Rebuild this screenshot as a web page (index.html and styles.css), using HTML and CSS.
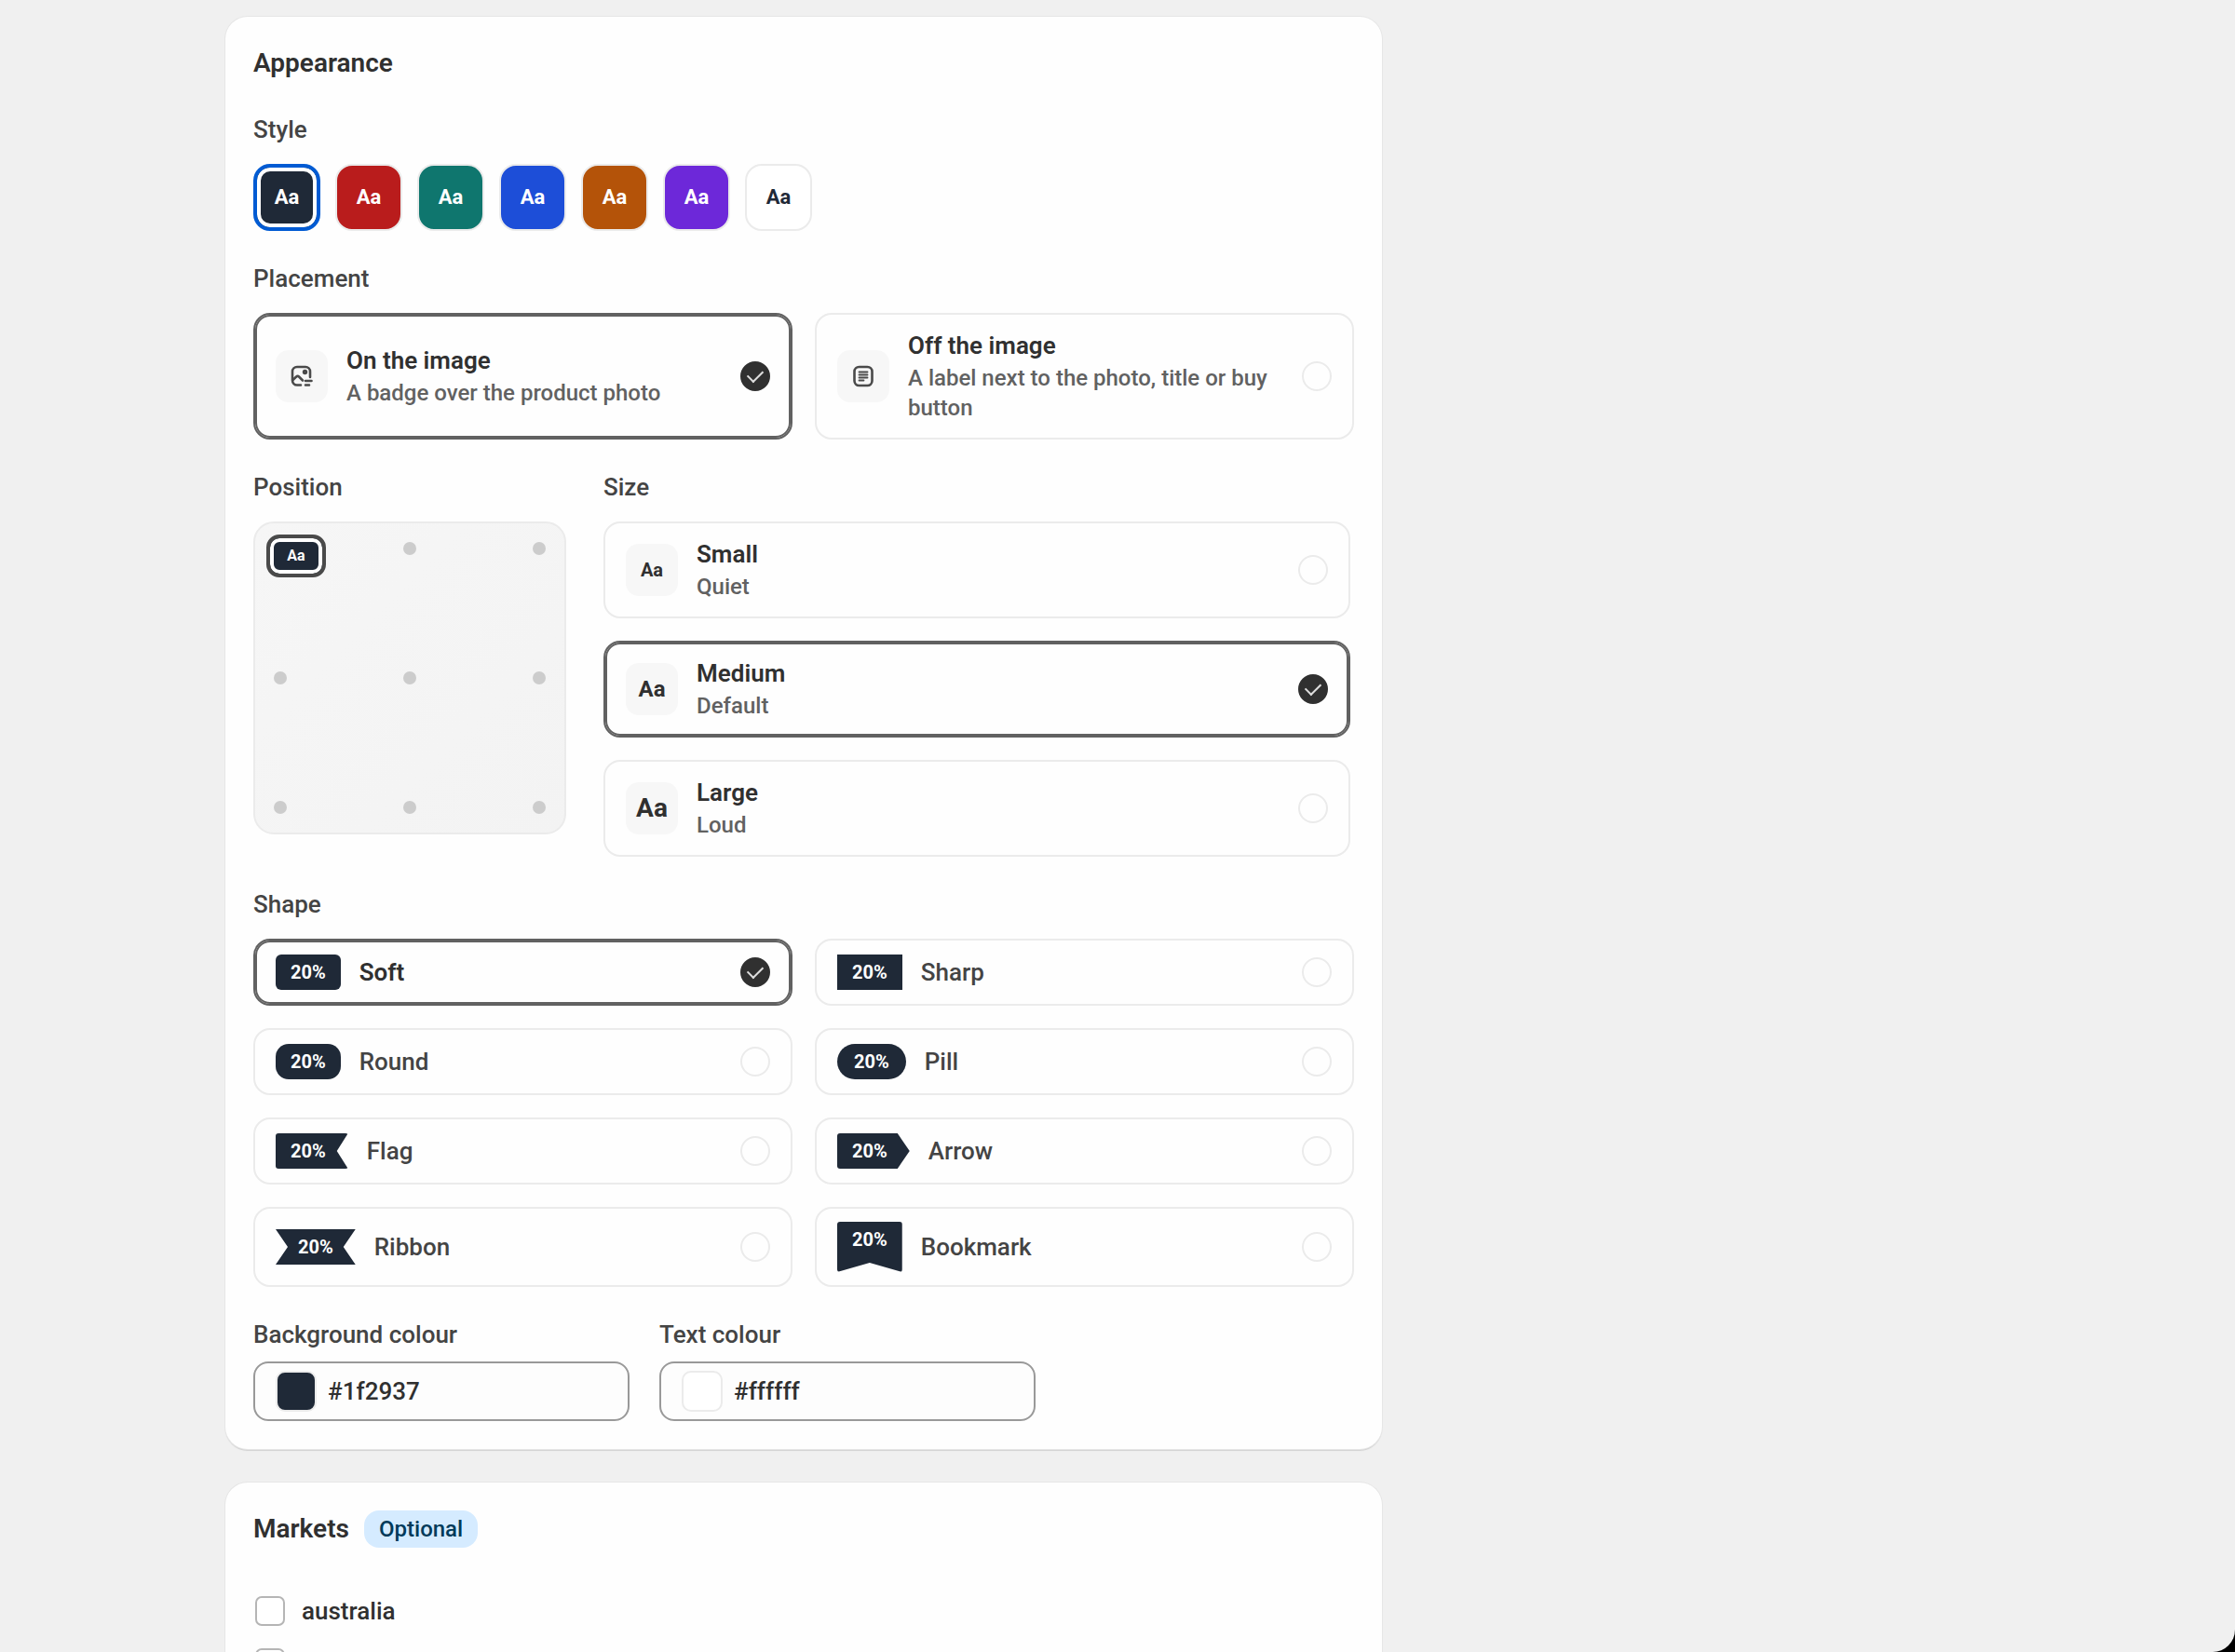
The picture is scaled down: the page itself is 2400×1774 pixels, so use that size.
FILE: index.html
```html
<!DOCTYPE html>
<html lang="en">
<head>
    <meta charset="UTF-8">
    <meta name="viewport" content="width=device-width, initial-scale=1.0">
    <title>Badge appearance</title>
    <link rel="stylesheet" href="styles.css">
</head>
<body>
    <main class="page">
        <section class="card">
            <h2 class="card-title">Appearance</h2>

            <div class="field">
                <h3 class="field-label">Style</h3>
                <div class="swatches">
                    <button type="button" class="swatch navy active">Aa</button>
                    <button type="button" class="swatch red">Aa</button>
                    <button type="button" class="swatch green">Aa</button>
                    <button type="button" class="swatch blue">Aa</button>
                    <button type="button" class="swatch orange">Aa</button>
                    <button type="button" class="swatch purple">Aa</button>
                    <button type="button" class="swatch white">Aa</button>
                </div>
            </div>

            <div class="field">
                <h3 class="field-label">Placement</h3>
                <div class="option-grid">
                    <label class="option">
                        <span class="option-icon">
                            <svg width="26" height="26" viewBox="0 0 26 26" fill="none" stroke="#4a4a4a" stroke-width="2.6" stroke-linecap="round" stroke-linejoin="round">
                                <path d="M12 22.500H8A5 5 0 0 1 3 17.500V8A5 5 0 0 1 8 3H17A5 5 0 0 1 22 8V14"/>
                                <path d="M3.500 17l3.700-3.500a2 2 0 0 1 2.800 0L14 17.500"/>
                                <circle cx="16.500" cy="8.500" r="1.400" fill="#4a4a4a"/>
                                <path d="M17 18h6.500M17 22.500h4"/>
                            </svg>
                        </span>
                        <span class="option-text">
                            <span class="option-title">On the image</span>
                            <span class="option-sub">A badge over the product photo</span>
                        </span>
                        <input type="radio" name="placement" class="radio" checked>
                    </label>
                    <label class="option">
                        <span class="option-icon">
                            <svg width="26" height="26" viewBox="0 0 26 26" fill="none" stroke="#4a4a4a" stroke-width="2.6" stroke-linecap="round">
                                <rect x="3.500" y="3" width="19" height="20" rx="5"/>
                                <path stroke-width="1.800" d="M8.500 8.500h9M8.500 11.500h9M8.500 14.500h9M8.500 17.500h5"/>
                            </svg>
                        </span>
                        <span class="option-text">
                            <span class="option-title">Off the image</span>
                            <span class="option-sub">A label next to the photo, title or buy button</span>
                        </span>
                        <input type="radio" name="placement" class="radio">
                    </label>
                </div>
            </div>

            <div class="field-row">
                <div class="field">
                    <h3 class="field-label">Position</h3>
                    <div class="position-box">
                        <input type="radio" name="position" class="dot" aria-label="Top left" checked>
                        <input type="radio" name="position" class="dot" aria-label="Top centre">
                        <input type="radio" name="position" class="dot" aria-label="Top right">
                        <input type="radio" name="position" class="dot" aria-label="Middle left">
                        <input type="radio" name="position" class="dot" aria-label="Middle centre">
                        <input type="radio" name="position" class="dot" aria-label="Middle right">
                        <input type="radio" name="position" class="dot" aria-label="Bottom left">
                        <input type="radio" name="position" class="dot" aria-label="Bottom centre">
                        <input type="radio" name="position" class="dot" aria-label="Bottom right">
                        <span class="position-badge">Aa</span>
                    </div>
                </div>
                <div class="field size-field">
                    <h3 class="field-label">Size</h3>
                    <div class="option-list">
                        <label class="option">
                            <span class="option-icon small">Aa</span>
                            <span class="option-text">
                                <span class="option-title">Small</span>
                                <span class="option-sub">Quiet</span>
                            </span>
                            <input type="radio" name="size" class="radio">
                        </label>
                        <label class="option">
                            <span class="option-icon medium">Aa</span>
                            <span class="option-text">
                                <span class="option-title">Medium</span>
                                <span class="option-sub">Default</span>
                            </span>
                            <input type="radio" name="size" class="radio" checked>
                        </label>
                        <label class="option">
                            <span class="option-icon large">Aa</span>
                            <span class="option-text">
                                <span class="option-title">Large</span>
                                <span class="option-sub">Loud</span>
                            </span>
                            <input type="radio" name="size" class="radio">
                        </label>
                    </div>
                </div>
            </div>

            <div class="field">
                <h3 class="field-label">Shape</h3>
                <div class="option-grid">
                    <label class="option shape-option">
                        <span class="tag soft">20%</span>
                        <span class="option-text shape-name">Soft</span>
                        <input type="radio" name="shape" class="radio" checked>
                    </label>
                    <label class="option shape-option">
                        <span class="tag">20%</span>
                        <span class="option-text shape-name">Sharp</span>
                        <input type="radio" name="shape" class="radio">
                    </label>
                    <label class="option shape-option">
                        <span class="tag round">20%</span>
                        <span class="option-text shape-name">Round</span>
                        <input type="radio" name="shape" class="radio">
                    </label>
                    <label class="option shape-option">
                        <span class="tag pill">20%</span>
                        <span class="option-text shape-name">Pill</span>
                        <input type="radio" name="shape" class="radio">
                    </label>
                    <label class="option shape-option">
                        <span class="tag flag">20%</span>
                        <span class="option-text shape-name">Flag</span>
                        <input type="radio" name="shape" class="radio">
                    </label>
                    <label class="option shape-option">
                        <span class="tag arrow">20%</span>
                        <span class="option-text shape-name">Arrow</span>
                        <input type="radio" name="shape" class="radio">
                    </label>
                    <label class="option shape-option">
                        <span class="tag ribbon">20%</span>
                        <span class="option-text shape-name">Ribbon</span>
                        <input type="radio" name="shape" class="radio">
                    </label>
                    <label class="option shape-option">
                        <span class="tag bookmark">20%</span>
                        <span class="option-text shape-name">Bookmark</span>
                        <input type="radio" name="shape" class="radio">
                    </label>
                </div>
            </div>

            <div class="colour-row">
                <div class="colour-field">
                    <label class="field-label" for="bgColour">Background colour</label>
                    <div class="colour-input">
                        <button type="button" class="colour-chip navy" aria-label="Pick background colour"></button>
                        <input type="text" id="bgColour" value="#1f2937">
                    </div>
                </div>
                <div class="colour-field">
                    <label class="field-label" for="textColour">Text colour</label>
                    <div class="colour-input">
                        <button type="button" class="colour-chip white" aria-label="Pick text colour"></button>
                        <input type="text" id="textColour" value="#ffffff">
                    </div>
                </div>
            </div>
        </section>

        <section class="card">
            <div class="card-heading">
                <h2 class="card-title">Markets</h2>
                <span class="badge">Optional</span>
            </div>
            <div class="markets">
                <label class="market">
                    <input type="checkbox" class="checkbox">
                    australia
                </label>
                <div class="market">
                    <input type="checkbox" class="checkbox" aria-label="Next market">
                </div>
            </div>
        </section>
    </main>
</body>
</html>
```
FILE: styles.css
```css
* {
    margin: 0;
    padding: 0;
    box-sizing: border-box;
}

:root {
    --navy: #1f2937;
    --text: #303030;
    --muted: #616161;
    --line: #ebebeb;
}

body {
    background: #000;
    color: var(--text);
    font-family: Roboto, "Liberation Sans", sans-serif;
    font-size: 26px;
    font-weight: 500;
    line-height: 36px;
}

button,
input {
    font: inherit;
    color: inherit;
}

.page {
    display: flex;
    flex-direction: column;
    gap: 36px;
    height: 100vh;
    padding: 18px 24px 18px 242px;
    overflow-y: auto;
    scrollbar-width: none;
    background: #f0f0f0;
    border-bottom-right-radius: 24px;
}

.card {
    display: flex;
    flex-direction: column;
    flex-shrink: 0;
    gap: 32px;
    max-width: 1242px;
    padding: 30px;
    background: #fefefe;
    border-radius: 24px;
    box-shadow: 0 0 0 1px #e6e6e6, 0 2px 1px #d0d0d0;
}

.card-heading {
    display: flex;
    align-items: center;
    gap: 16px;
}

.card-title {
    font-size: 28px;
    font-weight: 600;
    line-height: 40px;
}

.field {
    display: flex;
    flex-direction: column;
    gap: 18px;
}

.field-label {
    font-size: 26px;
    font-weight: 500;
    line-height: 38px;
    color: #444;
}

/* Style presets */
.swatches {
    display: flex;
    gap: 16px;
}

.swatch {
    width: 72px;
    height: 72px;
    border: 2px solid var(--line);
    border-radius: 18px;
    color: #fff;
    font-size: 22px;
    font-weight: 700;
    cursor: pointer;
}

.swatch.active {
    border: 4px solid #005bd3;
    box-shadow: inset 0 0 0 4px #fff;
}

.navy {
    background: var(--navy);
}

.red {
    background: #b91c1c;
}

.green {
    background: #0f766e;
}

.blue {
    background: #1d4ed8;
}

.orange {
    background: #b45309;
}

.purple {
    background: #6d28d9;
}

.white {
    background: #fff;
    color: var(--navy);
}

/* Option cards */
.option-grid {
    display: grid;
    grid-template-columns: 1fr 1fr;
    gap: 24px;
}

.option-list {
    display: flex;
    flex-direction: column;
    gap: 24px;
}

.option {
    display: flex;
    align-items: center;
    gap: 20px;
    padding: 16px 22px;
    border: 2px solid var(--line);
    border-radius: 18px;
    cursor: pointer;
}

.option:has(.radio:checked) {
    border-color: #616161;
    box-shadow: inset 0 0 0 2px #616161;
}

.option-icon {
    display: flex;
    align-items: center;
    justify-content: center;
    width: 56px;
    height: 56px;
    border-radius: 14px;
    background: #f7f7f7;
    font-weight: 700;
}

.option-icon.small {
    font-size: 20px;
}

.option-icon.medium {
    font-size: 24px;
}

.option-icon.large {
    font-size: 28px;
}

.option-text {
    display: flex;
    flex: 1;
    flex-direction: column;
    gap: 2px;
}

.option-title {
    font-weight: 600;
    line-height: 34px;
}

.option-sub {
    font-size: 24px;
    line-height: 32px;
    color: var(--muted);
}

.radio {
    display: flex;
    align-items: center;
    justify-content: center;
    width: 32px;
    height: 32px;
    appearance: none;
    border: 2px solid var(--line);
    border-radius: 50%;
}

.radio:checked {
    border-color: var(--text);
    background: var(--text);
}

.radio:checked::after {
    content: "";
    width: 8px;
    height: 14px;
    margin-bottom: 4px;
    border: solid #ddd;
    border-width: 0 2px 2px 0;
    transform: rotate(45deg);
}

/* Position picker */
.field-row {
    display: flex;
    gap: 40px;
    padding-right: 4px;
}

.size-field {
    flex: 1;
}

.position-box {
    position: relative;
    display: grid;
    grid-template-columns: repeat(3, 14px);
    justify-content: space-between;
    align-content: space-between;
    width: 336px;
    height: 336px;
    padding: 20px;
    border: 2px solid var(--line);
    border-radius: 22px;
    background: linear-gradient(135deg, #f6f6f6, #f3f3f3);
}

.dot {
    width: 14px;
    height: 14px;
    appearance: none;
    border-radius: 50%;
    background: #ccc;
}

.position-badge {
    position: absolute;
    top: 12px;
    left: 12px;
    width: 64px;
    height: 46px;
    border: 4px solid #4a4a4a;
    border-radius: 14px;
    background: var(--navy);
    box-shadow: inset 0 0 0 4px #fff;
    color: #fff;
    font-size: 16px;
    font-weight: 700;
    line-height: 38px;
    text-align: center;
}

/* Shape picker */
.shape-option {
    min-height: 72px;
    padding: 14px 22px;
}

.shape-name {
    color: #444;
}

.option:has(.radio:checked) .shape-name {
    font-weight: 600;
    color: var(--text);
}

.tag {
    padding: 0 16px;
    background: var(--navy);
    color: #fff;
    font-size: 20px;
    font-weight: 700;
    line-height: 38px;
}

.tag.soft {
    border-radius: 6px;
}

.tag.round {
    border-radius: 14px;
}

.tag.pill {
    padding: 0 18px;
    border-radius: 19px;
}

.tag.flag {
    padding-right: 24px;
    border-radius: 3px;
    clip-path: polygon(0 0, 100% 0, calc(100% - 12px) 50%, 100% 100%, 0 100%);
}

.tag.arrow {
    padding-right: 24px;
    border-radius: 3px;
    clip-path: polygon(0 0, calc(100% - 13px) 0, 100% 50%, calc(100% - 13px) 100%, 0 100%);
}

.tag.ribbon {
    padding: 0 24px;
    clip-path: polygon(0 0, 100% 0, calc(100% - 13px) 50%, 100% 100%, 0 100%, 13px 50%);
}

.tag.bookmark {
    padding-bottom: 16px;
    border-radius: 3px;
    clip-path: polygon(0 0, 100% 0, 100% 100%, 50% calc(100% - 10px), 0 100%);
}

/* Colours */
.colour-row {
    display: flex;
    gap: 32px;
}

.colour-field {
    display: flex;
    flex-direction: column;
    gap: 10px;
    width: 404px;
}

.colour-input {
    display: flex;
    align-items: center;
    gap: 12px;
    height: 64px;
    padding: 0 22px;
    border: 2px solid #999;
    border-radius: 16px;
    background: #fdfdfd;
}

.colour-input input {
    flex: 1;
    min-width: 0;
    border: none;
    outline: none;
    background: none;
}

.colour-chip {
    width: 44px;
    height: 44px;
    border: 2px solid var(--line);
    border-radius: 10px;
    cursor: pointer;
}

/* Markets */
.badge {
    padding: 0 16px;
    border-radius: 16px;
    background: #d5ebff;
    color: #003a5a;
    font-size: 24px;
    line-height: 40px;
}

.markets {
    display: flex;
    flex-direction: column;
    gap: 20px;
    padding-top: 18px;
    padding-left: 2px;
}

.market {
    display: flex;
    align-items: center;
    gap: 18px;
    min-height: 36px;
}

.checkbox {
    width: 32px;
    height: 32px;
    appearance: none;
    border: 2px solid #b5b5b5;
    border-radius: 7px;
    background: #fff;
}
```
